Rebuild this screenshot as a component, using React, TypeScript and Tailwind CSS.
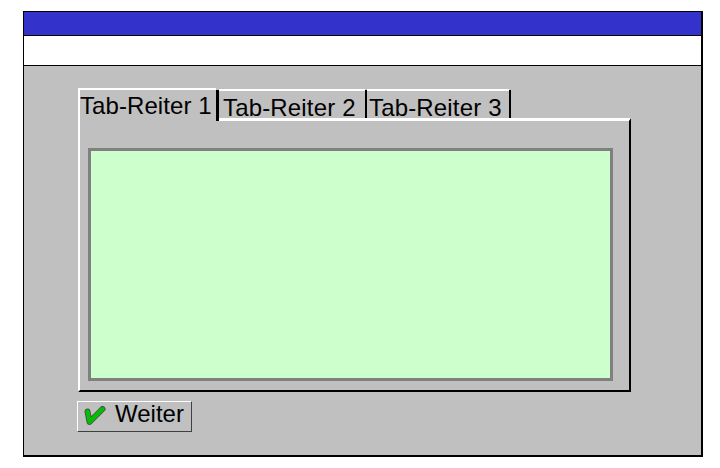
const tabFont = "font-['Liberation_Sans',Arial,sans-serif] text-[24px] leading-[26px] text-black whitespace-nowrap";

function CheckIcon() {
    return (
        <svg width="22" height="20" viewBox="0 0 22 20" fill="none" className="shrink-0">
            <path d="M3.5 5.5 L5.5 16 L18.5 3" stroke="#505050" strokeWidth="6" strokeLinecap="round" strokeLinejoin="round" />
            <path d="M3.5 5.5 L5.5 16 L18.5 3" stroke="#00c000" strokeWidth="4" strokeLinecap="round" strokeLinejoin="round" />
        </svg>
    );
}

export default function App() {
    return (
        <div className="h-[468px] w-[720px] bg-white pl-[23px] pt-[11px]">
            <div className="flex h-[446px] w-[680px] flex-col border-b-2 border-l border-r-2 border-t border-black bg-[#c0c0c0]">
                <div className="h-[23px] bg-[#3333cc]" />
                <div className="h-[31px] border-y border-black bg-white" />
                <div className="flex flex-1 flex-col pl-[54px] pt-[22px]">
                    <div className="relative z-10 -mb-[3px] flex h-[33px] items-start">
                        {/* active tab sits over the panel's top line */}
                        <div className="h-[33px] w-[138px] border-l-2 border-t-2 border-white bg-[#c0c0c0] pt-[3px]">
                            <span className={tabFont + " tracking-[0.08px]"}>Tab-Reiter 1</span>
                        </div>
                        <div className="mt-[2px] h-[31px] w-[3px] bg-black" />
                        <div className="mt-[1px] h-[30px] w-[146px] border-t-2 border-white pl-[4px] pt-[4px]">
                            <span className={tabFont + " tracking-[0.16px]"}>Tab-Reiter 2</span>
                        </div>
                        <div className="mt-[2px] h-[28px] w-[2px] bg-black" />
                        <div className="mt-[1px] h-[30px] w-[142px] border-t-2 border-white pl-[2px] pt-[4px]">
                            <span className={tabFont + " tracking-[0.16px]"}>Tab-Reiter 3</span>
                        </div>
                        <div className="mt-[2px] h-[28px] w-[2px] bg-black" />
                    </div>
                    <div className="h-[274px] w-[553px] border-b-2 border-l-2 border-r-2 border-t-[3px] border-b-black border-l-white border-r-black border-t-white pl-[8px] pt-[27px]">
                        <div className="h-[233px] w-[525px] border-[3px] border-[#808080] bg-[#ccffcc]" />
                    </div>
                    <button className="-ml-px mt-[9px] flex h-[31px] w-[115px] items-center gap-[9px] border border-b-[#404040] border-l-white border-r-[#404040] border-t-white pb-[1px] pl-[6px] font-['Liberation_Sans',Arial,sans-serif] text-[24px] leading-[26px] text-black">
                        <CheckIcon />
                        <span className="mb-[5px]">Weiter</span>
                    </button>
                </div>
            </div>
        </div>
    );
}
